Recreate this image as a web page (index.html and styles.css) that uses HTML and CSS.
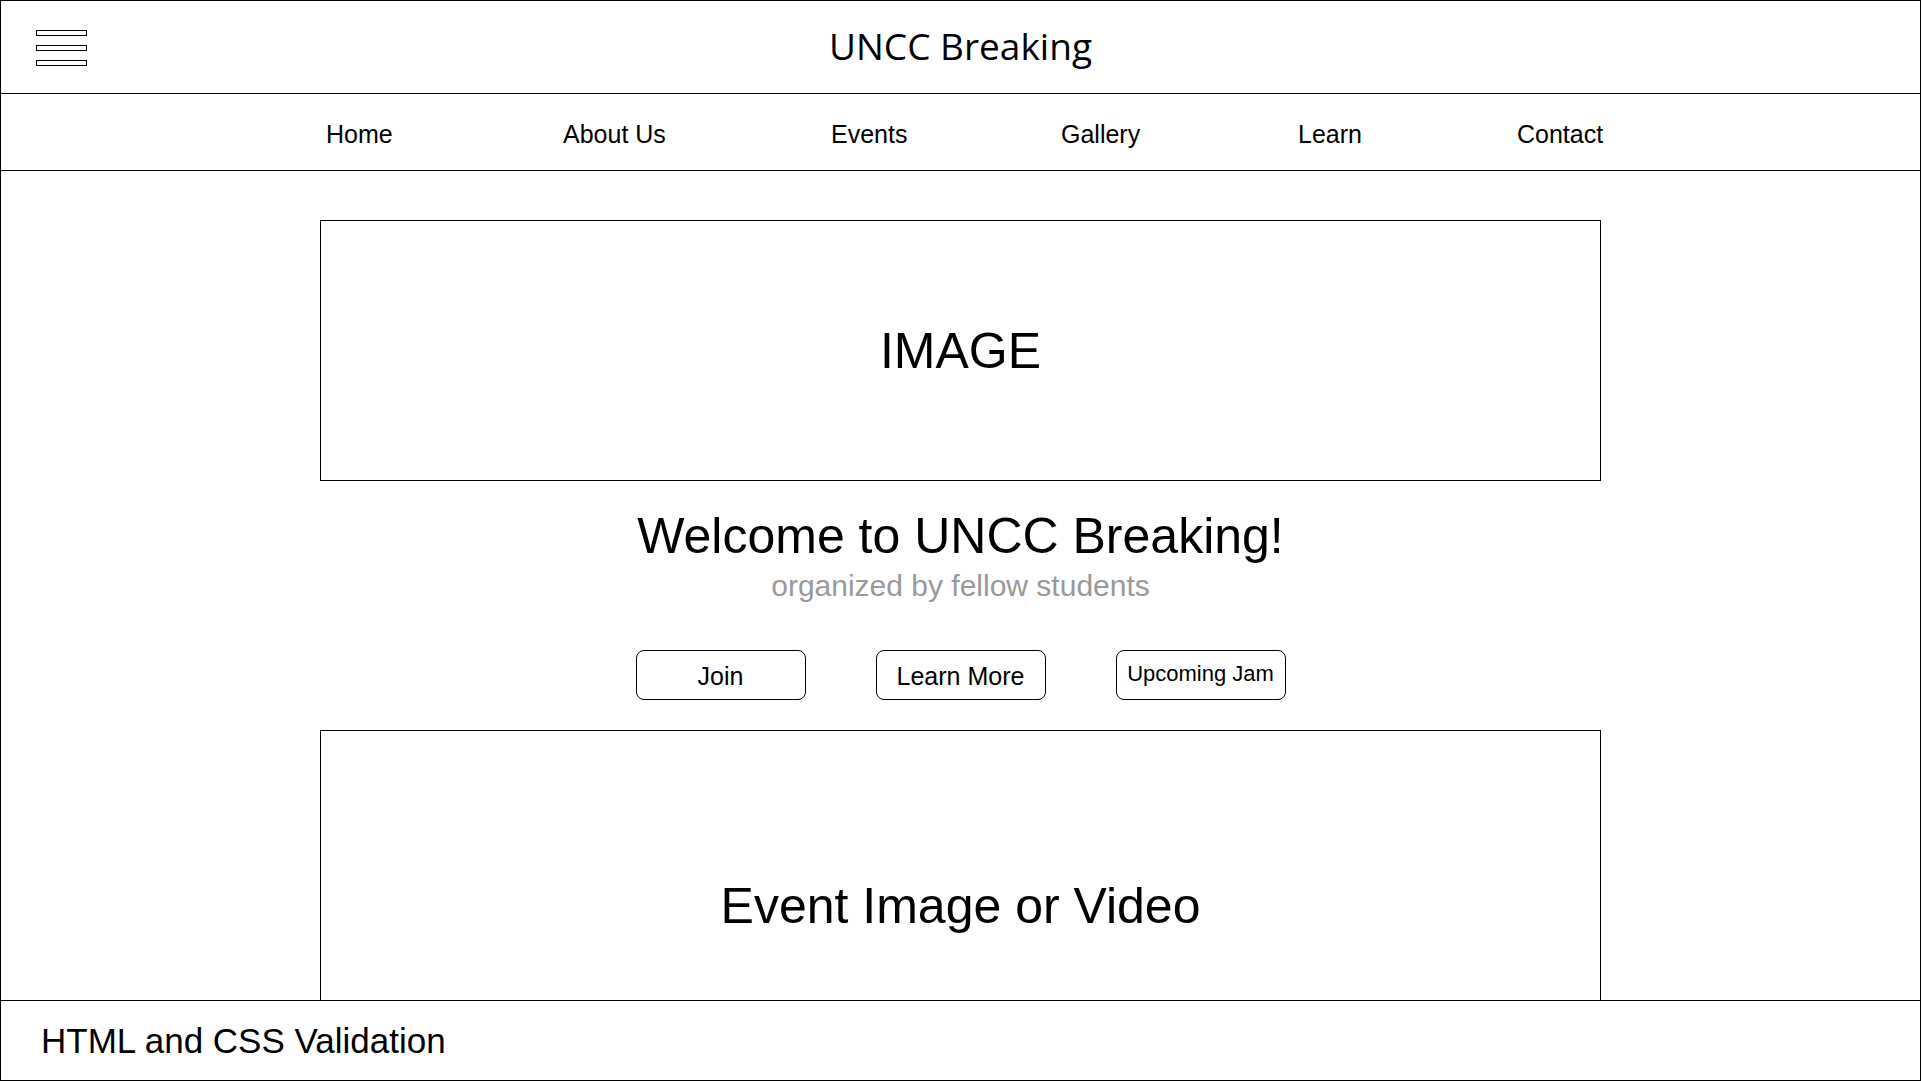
FILE: index.html
```html
<!DOCTYPE html>
<html lang="en">
<head>
<meta charset="utf-8">
<title>UNCC Breaking</title>
<link rel="stylesheet" href="styles.css">
</head>
<body>
<div class="frame">
  <header class="topbar">
    <div class="menu" aria-label="Menu">
      <span class="bar"></span>
      <span class="bar"></span>
      <span class="bar"></span>
    </div>
    <h1 class="brand">UNCC Breaking</h1>
    <div class="topbar-spacer"></div>
  </header>
  <nav class="nav">
    <a href="#">Home</a>
    <a href="#">About Us</a>
    <a href="#">Events</a>
    <a href="#">Gallery</a>
    <a href="#">Learn</a>
    <a href="#">Contact</a>
  </nav>
  <main class="main">
    <div class="hero-image">IMAGE</div>
    <h2 class="welcome">Welcome to UNCC Breaking!</h2>
    <p class="tagline">organized by fellow students</p>
    <div class="actions">
      <button class="btn">Join</button>
      <button class="btn">Learn More</button>
      <button class="btn btn-small">Upcoming Jam</button>
    </div>
    <div class="event-media">Event Image or Video</div>
  </main>
  <footer class="footer">HTML and CSS Validation</footer>
</div>
</body>
</html>
```

FILE: styles.css
```css
html, body {
  margin: 0;
  padding: 0;
  background: #fff;
}

body {
  font-family: "Liberation Sans", Arial, sans-serif;
  color: #000;
  width: 1923px;
  height: 1081px;
  overflow: hidden;
}

.frame {
  box-sizing: border-box;
  width: 1921px;
  height: 1081px;
  border: 1px solid #000;
  display: flex;
  flex-direction: column;
}

/* Top bar */
.topbar {
  box-sizing: border-box;
  height: 93px;
  flex-shrink: 0;
  border-bottom: 1px solid #000;
  display: grid;
  grid-template-columns: 1fr auto 1fr;
  align-items: center;
  padding: 0 0 3px 0;
}

.menu {
  align-self: start;
  margin: 29px 0 0 35px;
  width: 51px;
  display: flex;
  flex-direction: column;
  gap: 9px;
}

.bar {
  display: block;
  box-sizing: border-box;
  height: 6px;
  border: 1px solid #000;
  background: #fff;
}

.brand {
  margin: 0;
  font-family: "Open Sans", "Noto Sans", sans-serif;
  font-weight: 400;
  font-size: 37px;
  line-height: 1;
  color: #000;
}

/* Navigation */
.nav {
  box-sizing: border-box;
  height: 77px;
  flex-shrink: 0;
  border-bottom: 1px solid #000;
  display: grid;
  grid-template-columns: 237px 268px 230px 237px 219px auto;
  align-items: center;
  padding: 5px 0 0 325px;
}

.nav a {
  font-size: 25px;
  line-height: 1;
  color: #000;
  text-decoration: none;
  white-space: nowrap;
}

/* Main content */
.main {
  flex: 1 1 0;
  min-height: 0;
  overflow: hidden;
  display: flex;
  flex-direction: column;
  align-items: center;
}

.hero-image,
.event-media {
  box-sizing: border-box;
  width: 1281px;
  flex-shrink: 0;
  border: 1px solid #000;
  display: flex;
  align-items: center;
  justify-content: center;
  line-height: 1;
}

.hero-image {
  margin-top: 49px;
  height: 261px;
  font-size: 50px;
}

.welcome {
  margin: 31px 0 0;
  font-size: 50px;
  line-height: 49px;
  font-weight: 400;
  white-space: nowrap;
}

.tagline {
  margin: 10px 0 0;
  font-size: 30px;
  line-height: 30px;
  color: #999;
  white-space: nowrap;
}

.actions {
  margin-top: 49px;
  display: flex;
  gap: 70px;
  flex-shrink: 0;
}

.btn {
  box-sizing: border-box;
  width: 170px;
  height: 50px;
  padding: 2px 0 0;
  border: 1px solid #000;
  border-radius: 8px;
  background: #fff;
  color: #000;
  font-family: "Liberation Sans", Arial, sans-serif;
  font-size: 25px;
  line-height: 1;
}

.btn-small {
  font-size: 22px;
  padding: 0 0 2px;
}

.event-media {
  margin-top: 30px;
  height: 351px;
  font-size: 50px;
}

/* Footer */
.footer {
  box-sizing: border-box;
  height: 80px;
  flex-shrink: 0;
  border-top: 1px solid #000;
  display: flex;
  align-items: center;
  padding-left: 40px;
  font-size: 35px;
  line-height: 1;
}
```
